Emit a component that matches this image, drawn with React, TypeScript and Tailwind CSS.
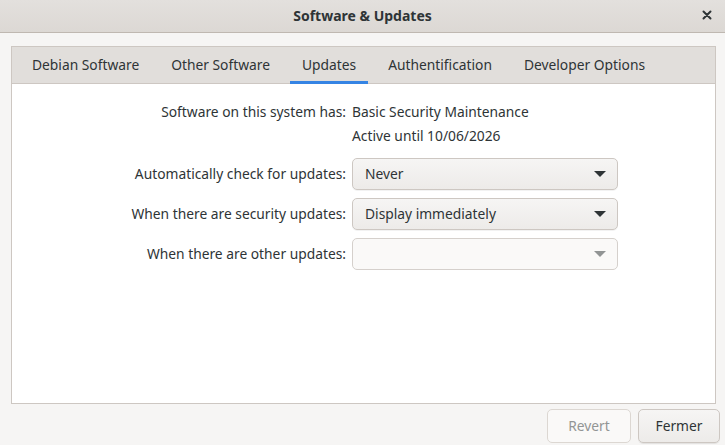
import React, { useState } from 'react'

const tabs = ['Debian Software', 'Other Software', 'Updates', 'Authentification', 'Developer Options']

const Arrow = ({ muted }: { muted?: boolean }) => (
  <svg width="12" height="6" viewBox="0 0 12 6" className="shrink-0">
    <path d="M0 0 L12 0 L6 6 Z" fill={muted ? '#919494' : '#2e3436'} />
  </svg>
)

const Combo = ({ value, disabled }: { value?: string; disabled?: boolean }) => (
  <div
    className={`h-[32px] w-[266px] flex items-center justify-between pl-[12px] pr-[11px] rounded-[5px] border ${
      disabled
        ? 'border-[#d5d0cc] bg-[#faf9f8]'
        : 'border-[#cdc7c2] bg-gradient-to-b from-[#f6f5f4] to-[#edebe9] shadow-[0_1px_0_rgba(0,0,0,0.05)]'
    }`}
  >
    <span className="text-[#2e3436] pt-px">{value}</span>
    <Arrow muted={disabled} />
  </div>
)

const App: React.FC = () => {
  const [active, setActive] = useState(2)

  return (
    <div
      className="w-[725px] h-[445px] flex flex-col bg-[#f6f5f4] text-[#2e3436] text-[13.8px] overflow-hidden"
      style={{ fontFamily: '"Noto Sans", "DejaVu Sans", sans-serif' }}
    >
      {/* header bar */}
      <div className="h-[33px] shrink-0 relative flex items-center justify-center bg-gradient-to-b from-[#e3e0dd] to-[#dcd8d4] border-b border-[#bfb8b1]">
        <span className="font-bold text-[14px] -mt-[2px]">Software &amp; Updates</span>
        <span className="absolute right-[10px] top-[7px] w-[16px] h-[16px] flex items-center justify-center">
          <svg width="10" height="10" viewBox="0 0 10 10">
            <path d="M1.5 1.5 L8.5 8.5 M8.5 1.5 L1.5 8.5" stroke="#2e3436" strokeWidth="2" strokeLinecap="round" />
          </svg>
        </span>
      </div>

      <div className="flex-1 flex flex-col px-[11px] pt-[13px]">
        {/* notebook */}
        <div className="h-[358px] mr-[-2px] flex flex-col border border-[#cdc7c2]">
          <div className="h-[37px] shrink-0 flex pl-[8px] gap-[8px] bg-[#e1dedb] border-b border-[#cdc7c2]">
            {tabs.map((t, i) => (
              <div
                key={t}
                onClick={() => setActive(i)}
                className={`px-[12px] pt-[2px] flex items-center cursor-pointer border-b-[3px] -mb-px ${
                  i === active ? 'border-[#3584e4]' : 'border-transparent'
                }`}
              >
                {t}
              </div>
            ))}
          </div>

          <div className="flex-1 bg-white pt-[16px]">
            <div className="grid grid-cols-[334px_266px] gap-x-[6px] items-center">
              <div className="h-[24px] flex items-center justify-end">Software on this system has:</div>
              <div className="h-[24px] flex items-center">Basic Security Maintenance</div>
              <div />
              <div className="h-[25px] flex items-center">Active until 10/06/2026</div>
            </div>
            <div className="mt-[9px] grid grid-cols-[334px_266px] gap-x-[6px] gap-y-[8px] items-center">
              <div className="text-right pt-px">Automatically check for updates:</div>
              <Combo value="Never" />
              <div className="text-right pt-px">When there are security updates:</div>
              <Combo value="Display immediately" />
              <div className="text-right pt-px">When there are other updates:</div>
              <Combo disabled />
            </div>
          </div>
        </div>

        {/* action buttons */}
        <div className="flex justify-end gap-[7px] mt-[5px] mr-[-6px]">
          <button className="h-[34px] w-[84px] rounded-[5px] border border-[#dcd7d2] bg-[#faf9f8] text-[#929595] pt-px">
            Revert
          </button>
          <button className="h-[34px] w-[82px] rounded-[5px] border border-[#cdc7c2] bg-gradient-to-b from-[#f6f5f4] to-[#edebe9] text-[#2e3436] shadow-[0_1px_0_rgba(0,0,0,0.07)] pt-px">
            Fermer
          </button>
        </div>
      </div>
    </div>
  )
}

export default App
